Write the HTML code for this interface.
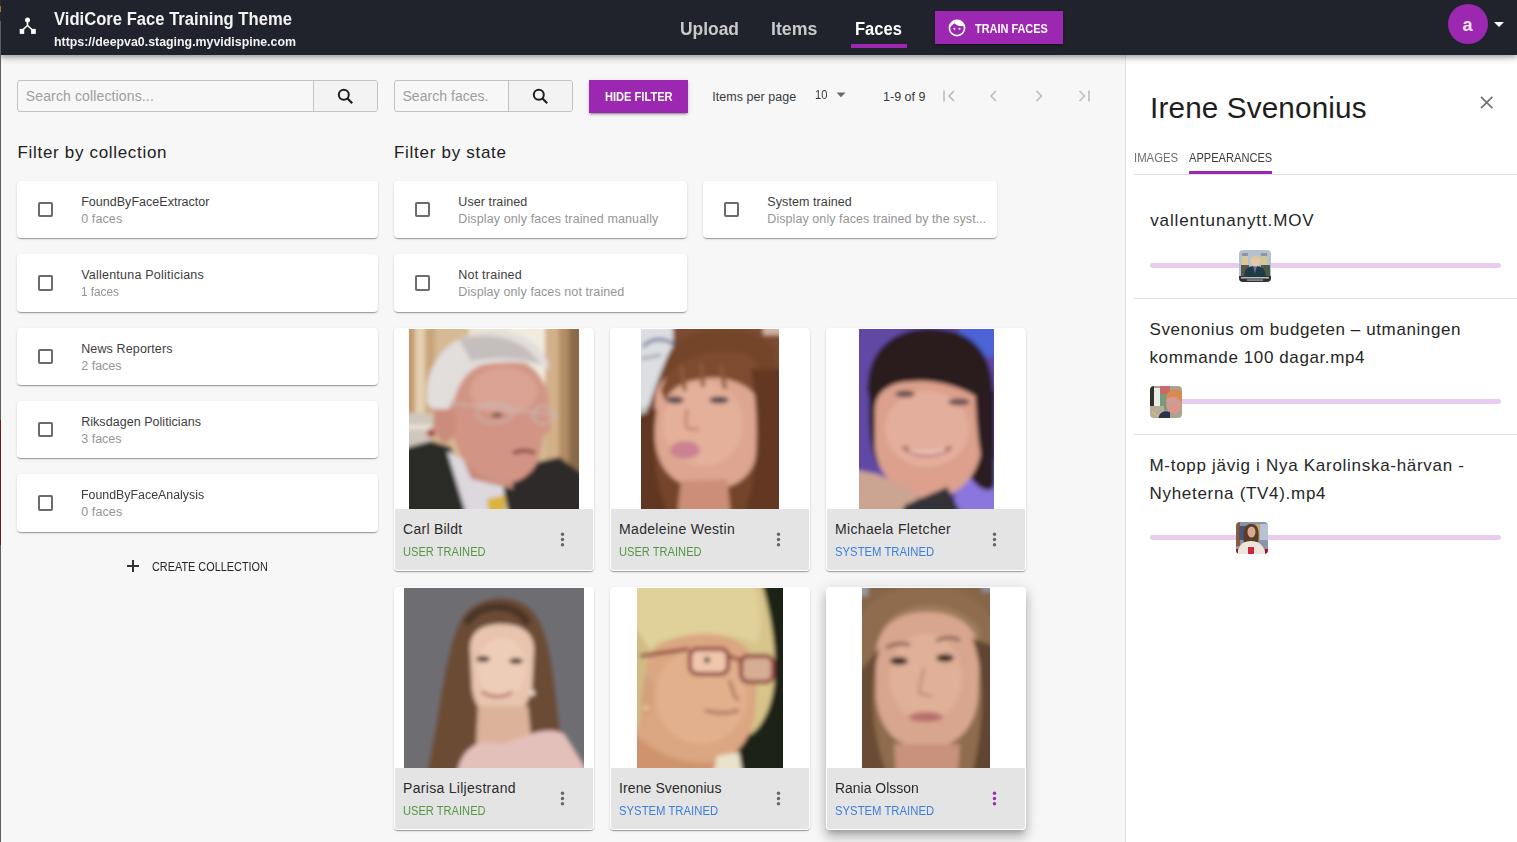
<!DOCTYPE html>
<html><head><meta charset="utf-8"><title>VidiCore Face Training Theme</title>
<style>
html,body{margin:0;padding:0;}
body{width:1517px;height:842px;overflow:hidden;position:relative;background:#f7f7f7;font-family:"Liberation Sans",sans-serif;}
.a{position:absolute;box-sizing:border-box;}
.t{position:absolute;z-index:10;white-space:pre;line-height:1;font-family:"Liberation Sans",sans-serif;}
.hdr{left:0;top:0;width:1517px;height:54.5px;background:#21232c;box-shadow:0 2px 4px -1px rgba(0,0,0,.2),0 4px 5px 0 rgba(0,0,0,.14),0 1px 10px 0 rgba(0,0,0,.12);z-index:5;}
.card{background:#fff;border-radius:4px;box-shadow:0 2px 1px -1px rgba(0,0,0,.2),0 1px 1px 0 rgba(0,0,0,.14),0 1px 3px 0 rgba(0,0,0,.12);}
.cb{width:15.4px;height:15.4px;border:2px solid #6c6c6c;border-radius:1.8px;}
.srch{border:1px solid #c2c2c2;border-radius:3px;background:#f7f7f7;}
.sbtn{background:#f3f3f3;border-left:1px solid #c2c2c2;}
.btn{background:#9c27b0;box-shadow:0 3px 1px -2px rgba(0,0,0,.2),0 2px 2px 0 rgba(0,0,0,.14),0 1px 5px 0 rgba(0,0,0,.12);border-radius:0;}
.fcard{background:#fff;border-radius:4px;box-shadow:0 2px 1px -1px rgba(0,0,0,.2),0 1px 1px 0 rgba(0,0,0,.14),0 1px 3px 0 rgba(0,0,0,.12);overflow:hidden;}
.fcard.hov{box-shadow:0 5px 5px -3px rgba(0,0,0,.2),0 8px 10px 1px rgba(0,0,0,.14),0 3px 14px 2px rgba(0,0,0,.12);}
.foot{position:absolute;left:1px;right:1px;bottom:1px;height:60.5px;background:#e4e4e4;border-radius:0 0 3px 3px;}
.dot{position:absolute;width:3.4px;height:3.4px;border-radius:50%;background:#666;}
.rp{left:1125px;top:54px;width:392px;height:788px;background:#fff;border-left:1px solid #e2e2e2;}
.hl{height:1px;background:#e0e0e0;}
.track{height:5px;border-radius:3px;background:#e8cbef;}
.thumb{width:32px;height:32px;border-radius:4px;overflow:hidden;}

</style></head><body>
<div class="a" style="left:0;top:0;width:1px;height:842px;background:#5e5e5e;z-index:9"></div><div class="a" style="left:0;top:0;width:1px;height:21px;background:#2c2a28;z-index:9"></div><div class="a" style="left:0;top:6px;width:1px;height:6px;background:#9a7838;z-index:9"></div><div class="a" style="left:0;top:420px;width:1px;height:125px;background:#6b1d1d;z-index:9"></div><div class="a hdr"></div><svg class="a" style="left:18px;top:16px;z-index:6" width="20" height="20" viewBox="0 0 20 20">
<circle cx="9.5" cy="4" r="2.5" fill="#fff"/>
<path d="M9.5 5 V9.5 L4 14.5 M9.5 9.5 L15 14.5" stroke="#fff" stroke-width="1.6" fill="none"/>
<rect x="1.7" y="12.9" width="4.5" height="5" fill="#fff"/>
<rect x="13.1" y="12.9" width="4.7" height="5" fill="#fff"/>
</svg><div class="a" style="left:851px;top:44px;width:56px;height:4px;background:#9c27b0;z-index:6"></div><div class="a btn" style="left:935px;top:11px;width:128px;height:33px;z-index:6"></div><svg class="a" style="left:948px;top:19px;z-index:7" width="18" height="18" viewBox="0 0 18 18">
<circle cx="9" cy="9" r="7.6" fill="none" stroke="#fff" stroke-width="1.6"/>
<path d="M1.6 8.6 L6.4 4.3 C8 6 9.8 6.8 12 7 L16.4 7.2 C15.6 3.6 12.6 1.4 9 1.4 C5 1.4 1.8 4.6 1.6 8.6Z" fill="#fff"/>
<circle cx="6.4" cy="9.8" r="1.05" fill="#fff"/><circle cx="11.5" cy="9.8" r="1.05" fill="#fff"/>
</svg><div class="a" style="left:1448px;top:4px;width:40px;height:40px;border-radius:50%;background:#9c27b0;z-index:6"></div><svg class="a" style="left:1493px;top:21px;z-index:6" width="12" height="7" viewBox="0 0 12 7"><path d="M1 1 H11 L6 6Z" fill="#fff"/></svg><div class="a srch" style="left:17px;top:80px;width:361px;height:32px;"></div><div class="a sbtn" style="left:313px;top:81px;width:64px;height:30px;border-radius:0 2px 2px 0"></div><svg class="a" style="left:337px;top:88px" width="17" height="17" viewBox="0 0 17 17"><circle cx="6.8" cy="6.8" r="5" fill="none" stroke="#1e1e1e" stroke-width="2"/><path d="M10.5 10.5 L15.2 15.2" stroke="#1e1e1e" stroke-width="2.2"/></svg><div class="a srch" style="left:394px;top:80px;width:179px;height:32px;"></div><div class="a sbtn" style="left:508px;top:81px;width:64px;height:30px;border-radius:0 2px 2px 0"></div><svg class="a" style="left:532px;top:88px" width="17" height="17" viewBox="0 0 17 17"><circle cx="6.8" cy="6.8" r="5" fill="none" stroke="#1e1e1e" stroke-width="2"/><path d="M10.5 10.5 L15.2 15.2" stroke="#1e1e1e" stroke-width="2.2"/></svg><div class="a btn" style="left:589px;top:80px;width:99px;height:32.5px;"></div><svg class="a" style="left:836px;top:92px" width="10" height="6" viewBox="0 0 10 6"><path d="M0.5 0.5 H9.5 L5 5.2Z" fill="#6a6a6a"/></svg><svg class="a" style="left:940px;top:87px" width="18" height="18" viewBox="0 0 18 18"><path d="M4 3.5 V14.5" stroke="#bcbcbc" stroke-width="1.6"/><path d="M14 4 L9 9 L14 14" stroke="#bcbcbc" stroke-width="1.6" fill="none"/></svg><svg class="a" style="left:984px;top:87px" width="18" height="18" viewBox="0 0 18 18"><path d="M12 4 L7 9 L12 14" stroke="#bcbcbc" stroke-width="1.6" fill="none"/></svg><svg class="a" style="left:1030px;top:87px" width="18" height="18" viewBox="0 0 18 18"><path d="M6.5 4 L11.5 9 L6.5 14" stroke="#bcbcbc" stroke-width="1.6" fill="none"/></svg><svg class="a" style="left:1076px;top:87px" width="18" height="18" viewBox="0 0 18 18"><path d="M3.5 4 L8.5 9 L3.5 14" stroke="#bcbcbc" stroke-width="1.6" fill="none"/><path d="M13 3.5 V14.5" stroke="#bcbcbc" stroke-width="1.6"/></svg><div class="a card" style="left:17px;top:181.00px;width:361px;height:57.33px"></div><div class="a cb" style="left:38px;top:202.00px"></div><div class="a card" style="left:17px;top:254.33px;width:361px;height:57.33px"></div><div class="a cb" style="left:38px;top:275.33px"></div><div class="a card" style="left:17px;top:327.67px;width:361px;height:57.33px"></div><div class="a cb" style="left:38px;top:348.67px"></div><div class="a card" style="left:17px;top:401.00px;width:361px;height:57.33px"></div><div class="a cb" style="left:38px;top:422.00px"></div><div class="a card" style="left:17px;top:474.33px;width:361px;height:57.33px"></div><div class="a cb" style="left:38px;top:495.33px"></div><svg class="a" style="left:126px;top:559px" width="14" height="14" viewBox="0 0 14 14"><path d="M7 1 V13 M1 7 H13" stroke="#333" stroke-width="2"/></svg><div class="a card" style="left:394px;top:181px;width:293px;height:57.33px"></div><div class="a cb" style="left:415px;top:202.00px"></div><div class="a card" style="left:703px;top:181px;width:294px;height:57.33px"></div><div class="a cb" style="left:724px;top:202.00px"></div><div class="a card" style="left:394px;top:254.33px;width:293px;height:57.33px"></div><div class="a cb" style="left:415px;top:275.33px"></div><div class="a rp"></div><svg class="a" style="left:1479px;top:95px" width="16" height="16" viewBox="0 0 16 16"><path d="M2 1.9 L13.4 13.1 M13.4 1.9 L2 13.1" stroke="#737373" stroke-width="1.7"/></svg><div class="a hl" style="left:1134px;top:174px;width:383px;"></div><div class="a" style="left:1189px;top:171px;width:83px;height:3px;background:#9c27b0"></div><div class="a hl" style="left:1134px;top:298px;width:383px;"></div><div class="a hl" style="left:1134px;top:434px;width:383px;"></div><div class="a track" style="left:1150px;top:263px;width:351px"></div><div class="a track" style="left:1150px;top:399px;width:351px"></div><div class="a track" style="left:1150px;top:535px;width:351px"></div>
<div class="a fcard" style="left:394px;top:328px;width:200px;height:242.5px;z-index:2"><div class="foot"></div></div><svg class="a" style="left:409px;top:329px;z-index:3" width="170" height="180" viewBox="0 0 170 180" preserveAspectRatio="none"><defs><filter id="b409_329" x="-10%" y="-10%" width="120%" height="120%"><feGaussianBlur stdDeviation="2.2"/></filter><clipPath id="c409_329"><rect width="170" height="180"/></clipPath></defs><g clip-path="url(#c409_329)"><g filter="url(#b409_329)">
<rect x="-8" y="-8" width="186" height="196" fill="#d6ba94"/>
<rect x="-8" y="-8" width="14" height="196" fill="#c49a6c"/>
<rect x="6" y="-8" width="10" height="130" fill="#e4d0b2"/>
<rect x="16" y="-8" width="10" height="130" fill="#caa47a"/>
<rect x="60" y="-8" width="80" height="80" fill="#ece2d0"/>
<rect x="100" y="-8" width="40" height="110" fill="#f2ece0"/>
<rect x="136" y="-8" width="14" height="196" fill="#d2b08a"/>
<rect x="150" y="-8" width="10" height="196" fill="#b48c64"/>
<rect x="160" y="-8" width="20" height="196" fill="#8a6a4a"/>
<rect x="-8" y="84" width="32" height="36" fill="#d0c6ba"/>
<rect x="-8" y="96" width="30" height="4" fill="#ece6de"/>
<circle cx="22" cy="104" r="4" fill="#a84438"/>
<path d="M-8 120 L22 112 L42 118 L64 188 L-8 188Z" fill="#2c2a28"/>
<path d="M94 160 L124 134 L150 128 L178 148 L178 188 L94 188Z" fill="#2e2c2a"/>
<path d="M38 122 L64 136 L94 158 L100 188 L58 188Z" fill="#dcd8de"/>
<path d="M78 170 L96 166 L97 188 L80 188Z" fill="#dab43c"/>
<path d="M46 110 L100 118 L104 160 L62 150Z" fill="#c68c7c"/>
<path d="M40 58 C40 35 70 28 100 30 C125 32 138 50 140 75 L142 100 L134 108 L130 130 C122 148 106 156 92 154 C72 150 56 138 48 118 L40 96 Z" fill="#d29484"/>
<ellipse cx="95" cy="62" rx="34" ry="24" fill="#daa292"/>
<ellipse cx="36" cy="92" rx="11" ry="22" fill="#cc8c7c"/>
<path d="M18 74 C14 30 45 2 85 2 C120 2 138 20 140 40 C122 32 95 32 72 36 C58 42 50 54 46 68 L40 80 L28 80 C22 80 19 77 18 74Z" fill="#e2dedc"/>
<path d="M50 10 C80 2 115 8 132 36 C112 28 85 28 62 32Z" fill="#c4bebc"/>
<path d="M40 74 L150 86" stroke="#c8bcb4" stroke-width="1.6" fill="none"/>
<ellipse cx="86" cy="84" rx="18" ry="10" fill="none" stroke="#c6bab2" stroke-width="1.8"/>
<ellipse cx="134" cy="86" rx="10" ry="9" fill="none" stroke="#c6bab2" stroke-width="1.8"/>
<ellipse cx="88" cy="86" rx="6" ry="2.5" fill="#7a5450"/>
<path d="M104 124 C112 121 120 121 126 124" stroke="#7a3a3a" stroke-width="3.5" fill="none"/>
</g></g></svg><svg class="a" style="left:554px;top:528px;z-index:4" width="16" height="24" viewBox="0 0 16 24"><circle cx="8.5" cy="6.2" r="1.7" fill="#666"/><circle cx="8.5" cy="11.45" r="1.7" fill="#666"/><circle cx="8.5" cy="16.7" r="1.7" fill="#666"/></svg><div class="a fcard" style="left:610px;top:328px;width:200px;height:242.5px;z-index:2"><div class="foot"></div></div><svg class="a" style="left:641px;top:329px;z-index:3" width="138" height="180" viewBox="0 0 138 180" preserveAspectRatio="none"><defs><filter id="b641_329" x="-10%" y="-10%" width="120%" height="120%"><feGaussianBlur stdDeviation="2.2"/></filter><clipPath id="c641_329"><rect width="138" height="180"/></clipPath></defs><g clip-path="url(#c641_329)"><g filter="url(#b641_329)">
<rect x="-8" y="-8" width="154" height="196" fill="#7c4c30"/>
<rect x="-8" y="-8" width="40" height="86" fill="#dcdee2"/>
<path d="M2 18 C10 8 26 8 36 18" stroke="#3a4a7a" stroke-width="2.5" fill="none"/>
<path d="M0 30 L20 26" stroke="#7a8090" stroke-width="2"/>
<rect x="-8" y="78" width="14" height="50" fill="#c0c4bc"/>
<rect x="122" y="-8" width="22" height="14" fill="#d2b4a4"/>
<path d="M30 20 C50 -5 110 -8 134 20 L146 188 L-8 188 L-8 120 C5 90 15 50 30 20Z" fill="#74452a"/>
<path d="M14 72 C14 46 40 38 70 38 C100 38 118 55 118 80 L116 122 C112 150 92 162 62 160 C34 158 16 140 14 110Z" fill="#dea690"/>
<ellipse cx="62" cy="95" rx="40" ry="42" fill="#e4b09a"/>
<path d="M20 62 C28 30 70 16 106 26 C120 34 126 50 126 70 L114 66 C102 52 80 46 60 50 C44 52 30 58 24 72Z" fill="#7e4c2e"/>
<path d="M40 36 L44 62 M60 34 L62 58 M80 36 L84 60" stroke="#8e5a38" stroke-width="4"/>
<path d="M110 40 L146 40 L146 188 L102 188 C116 150 120 100 110 40Z" fill="#623820"/>
<path d="M-8 88 L16 80 C10 120 14 160 30 188 L-8 188Z" fill="#603820"/>
<ellipse cx="34" cy="71" rx="9" ry="3.5" fill="#504850"/>
<ellipse cx="78" cy="71" rx="10" ry="3.5" fill="#504850"/>
<path d="M46 80 C46 90 42 96 48 100 L58 100" stroke="#be7a6a" stroke-width="2.5" fill="none"/>
<ellipse cx="44" cy="121" rx="15" ry="9" fill="#cc8290"/>
<path d="M40 152 L86 150 L90 188 L36 188Z" fill="#cc8e78"/>
</g></g></svg><svg class="a" style="left:770px;top:528px;z-index:4" width="16" height="24" viewBox="0 0 16 24"><circle cx="8.5" cy="6.2" r="1.7" fill="#666"/><circle cx="8.5" cy="11.45" r="1.7" fill="#666"/><circle cx="8.5" cy="16.7" r="1.7" fill="#666"/></svg><div class="a fcard" style="left:826px;top:328px;width:200px;height:242.5px;z-index:2"><div class="foot"></div></div><svg class="a" style="left:859px;top:329px;z-index:3" width="135" height="180" viewBox="0 0 135 180" preserveAspectRatio="none"><defs><filter id="b859_329" x="-10%" y="-10%" width="120%" height="120%"><feGaussianBlur stdDeviation="2.2"/></filter><clipPath id="c859_329"><rect width="135" height="180"/></clipPath></defs><g clip-path="url(#c859_329)"><g filter="url(#b859_329)">
<rect x="-8" y="-8" width="151" height="196" fill="#6048a4"/>
<rect x="100" y="-8" width="43" height="36" fill="#4c64d4"/>
<rect x="96" y="130" width="47" height="58" fill="#8a76dc"/>
<path d="M10 70 C2 20 40 -4 78 0 C118 2 138 30 134 80 L134 160 C122 165 112 150 106 140 L30 140 C12 140 10 110 10 70Z" fill="#2a1c1e"/>
<path d="M16 80 C16 58 40 50 70 50 C100 50 122 62 124 85 L122 122 C118 150 96 170 70 170 C44 170 20 150 16 120Z" fill="#dca08c"/>
<ellipse cx="68" cy="100" rx="42" ry="38" fill="#e4ae9c"/>
<path d="M8 62 C12 15 50 0 80 2 C115 4 136 30 132 75 L126 74 C112 62 86 52 62 52 C40 52 24 56 14 64Z" fill="#2a1a1e"/>
<path d="M116 62 L136 62 L136 158 C124 150 118 120 116 62Z" fill="#2c1a20"/>
<path d="M-8 140 L-8 188 L70 188 L52 160 L18 145Z" fill="#cca492"/>
<path d="M46 176 L88 158 L104 188 L40 188Z" fill="#323238"/>
<ellipse cx="46" cy="65" rx="10" ry="3.5" fill="#6a5050"/>
<ellipse cx="100" cy="73" rx="11" ry="3.5" fill="#6a5050"/>
<path d="M44 118 C58 128 80 128 92 118" stroke="#ac5c64" stroke-width="4" fill="none"/>
<path d="M50 121 C60 125 76 125 86 121" stroke="#f2e0d6" stroke-width="2" fill="none"/>
</g></g></svg><svg class="a" style="left:986px;top:528px;z-index:4" width="16" height="24" viewBox="0 0 16 24"><circle cx="8.5" cy="6.2" r="1.7" fill="#666"/><circle cx="8.5" cy="11.45" r="1.7" fill="#666"/><circle cx="8.5" cy="16.7" r="1.7" fill="#666"/></svg><div class="a fcard" style="left:394px;top:587px;width:200px;height:242.5px;z-index:2"><div class="foot"></div></div><svg class="a" style="left:404px;top:588px;z-index:3" width="180" height="180" viewBox="0 0 180 180" preserveAspectRatio="none"><defs><filter id="b404_588" x="-10%" y="-10%" width="120%" height="120%"><feGaussianBlur stdDeviation="2.2"/></filter><clipPath id="c404_588"><rect width="180" height="180"/></clipPath></defs><g clip-path="url(#c404_588)"><g filter="url(#b404_588)">
<rect x="-8" y="-8" width="196" height="196" fill="#6e6e72"/>
<path d="M22 188 C36 130 40 60 58 30 C74 4 118 2 134 30 C152 62 152 130 162 188Z" fill="#6c4c36"/>
<path d="M62 36 C74 14 112 12 124 36" stroke="#4a3628" stroke-width="8" fill="none"/>
<path d="M66 60 C66 42 80 36 98 36 C118 36 130 45 130 62 L128 100 C124 120 112 130 98 130 C82 130 70 120 68 100Z" fill="#e8c4ae"/>
<ellipse cx="98" cy="80" rx="24" ry="30" fill="#eecdb8"/>
<path d="M74 118 L124 118 L128 160 L72 160Z" fill="#dcb29a"/>
<path d="M52 188 C58 160 72 150 98 156 C120 150 140 136 160 146 L186 188Z" fill="#e4c0ba"/>
<ellipse cx="79" cy="71" rx="7" ry="3" fill="#4a3028"/>
<ellipse cx="112" cy="73" rx="7" ry="3" fill="#4a3028"/>
<path d="M78 104 C88 110 100 110 108 104" stroke="#b46c64" stroke-width="3" fill="none"/>
<circle cx="128" cy="105" r="3" fill="#e6d8cc"/>
</g></g></svg><svg class="a" style="left:554px;top:787px;z-index:4" width="16" height="24" viewBox="0 0 16 24"><circle cx="8.5" cy="6.2" r="1.7" fill="#666"/><circle cx="8.5" cy="11.45" r="1.7" fill="#666"/><circle cx="8.5" cy="16.7" r="1.7" fill="#666"/></svg><div class="a fcard" style="left:610px;top:587px;width:200px;height:242.5px;z-index:2"><div class="foot"></div></div><svg class="a" style="left:637px;top:588px;z-index:3" width="146" height="180" viewBox="0 0 146 180" preserveAspectRatio="none"><defs><filter id="b637_588" x="-10%" y="-10%" width="120%" height="120%"><feGaussianBlur stdDeviation="2.2"/></filter><clipPath id="c637_588"><rect width="146" height="180"/></clipPath></defs><g clip-path="url(#c637_588)"><g filter="url(#b637_588)">
<rect x="-8" y="-8" width="162" height="196" fill="#1c2014"/>
<path d="M-8 -8 L124 -8 C132 20 138 50 138 80 C138 112 128 136 114 146 L-8 158Z" fill="#d6c48a"/>
<path d="M-8 -8 L116 -8 C124 15 126 38 120 56 C98 46 60 42 22 54 L-8 76Z" fill="#e0d09a"/>
<path d="M8 82 C8 56 40 46 70 46 C100 46 118 60 120 90 L118 128 C112 158 92 176 66 180 L-8 188 L-8 120Z" fill="#dba682"/>
<ellipse cx="64" cy="108" rx="46" ry="48" fill="#e2b08c"/>
<path d="M-8 140 C20 170 60 184 100 168 L106 188 L-8 188Z" fill="#cf946e"/>
<ellipse cx="9" cy="108" rx="9" ry="20" fill="#d4a07c"/>
<path d="M-8 30 L-8 150 C0 146 6 130 4 112 L12 60Z" fill="#d0bc82"/>
<path d="M3 68 L52 61" stroke="#8c3c3a" stroke-width="3.5"/>
<rect x="53" y="61" width="38" height="25" rx="7" fill="#f0c6ac" stroke="#8c3c3a" stroke-width="4"/>
<rect x="104" y="68" width="32" height="26" rx="7" fill="#d6ae94" stroke="#8c3c3a" stroke-width="4"/>
<path d="M91 68 L104 72" stroke="#8c3c3a" stroke-width="3"/>
<circle cx="70" cy="72" r="3" fill="#4a3a40"/>
<path d="M92 92 C98 104 96 110 102 112" stroke="#b07060" stroke-width="3" fill="none"/>
<path d="M68 122 C78 126 92 126 102 122" stroke="#ac6c5e" stroke-width="3" fill="none"/>
<path d="M80 168 L102 164 L106 188 L76 188Z" fill="#eae2ca"/>
<circle cx="9" cy="120" r="2" fill="#f0e0a0"/>
</g></g></svg><svg class="a" style="left:770px;top:787px;z-index:4" width="16" height="24" viewBox="0 0 16 24"><circle cx="8.5" cy="6.2" r="1.7" fill="#666"/><circle cx="8.5" cy="11.45" r="1.7" fill="#666"/><circle cx="8.5" cy="16.7" r="1.7" fill="#666"/></svg><div class="a fcard hov" style="left:826px;top:587px;width:200px;height:242.5px;z-index:2"><div class="foot"></div></div><svg class="a" style="left:862px;top:588px;z-index:3" width="128" height="180" viewBox="0 0 128 180" preserveAspectRatio="none"><defs><filter id="b862_588" x="-10%" y="-10%" width="120%" height="120%"><feGaussianBlur stdDeviation="2.2"/></filter><clipPath id="c862_588"><rect width="128" height="180"/></clipPath></defs><g clip-path="url(#c862_588)"><g filter="url(#b862_588)">
<rect x="-8" y="-8" width="144" height="196" fill="#86664a"/>
<rect x="-8" y="-8" width="14" height="16" fill="#9a9aa2"/>
<rect x="120" y="-8" width="16" height="12" fill="#8c929a"/>
<path d="M-8 188 L-8 40 C6 4 40 -2 64 -2 C96 -2 130 12 136 50 L136 188Z" fill="#8e6c4e"/>
<path d="M20 40 C40 10 90 8 118 40 L120 70 C110 40 80 28 60 28 C40 28 25 40 18 70Z" fill="#9c7a5a"/>
<path d="M14 62 C18 34 40 24 64 24 C92 24 112 34 118 62 L116 110 C112 146 90 160 64 160 C38 160 18 146 14 110Z" fill="#d8a68e"/>
<ellipse cx="64" cy="90" rx="36" ry="44" fill="#e0b098"/>
<path d="M110 50 C122 80 124 130 110 188 L136 188 L136 60Z" fill="#5e4432"/>
<path d="M18 60 C6 100 10 150 26 188 L-8 188 L-8 90Z" fill="#6a4c36"/>
<path d="M32 156 L98 156 L96 188 L34 188Z" fill="#c8927c"/>
<path d="M24 60 C32 55 40 55 48 57 M74 53 C82 49 90 49 98 52" stroke="#5a3c30" stroke-width="2.5" fill="none"/>
<ellipse cx="37" cy="73" rx="9" ry="4" fill="#3e2a28"/>
<ellipse cx="83" cy="70" rx="9" ry="4" fill="#3e2a28"/>
<path d="M62 80 C60 90 56 100 58 106 L70 108" stroke="#c08a78" stroke-width="2.5" fill="none"/>
<ellipse cx="64" cy="129" rx="17" ry="5" fill="#b86e6c"/>
</g></g></svg><svg class="a" style="left:986px;top:787px;z-index:4" width="16" height="24" viewBox="0 0 16 24"><circle cx="8.5" cy="6.2" r="1.7" fill="#9c27b0"/><circle cx="8.5" cy="11.45" r="1.7" fill="#9c27b0"/><circle cx="8.5" cy="16.7" r="1.7" fill="#9c27b0"/></svg><div class="a" style="left:1239px;top:250px;width:32px;height:32px;border-radius:4px;overflow:hidden;z-index:4"><svg class="a" style="left:0;top:0;z-index:4" width="32" height="32" viewBox="0 0 32 32" preserveAspectRatio="none"><defs><filter id="b0_0" x="-10%" y="-10%" width="120%" height="120%"><feGaussianBlur stdDeviation="0.5"/></filter><clipPath id="c0_0"><rect width="32" height="32"/></clipPath></defs><g clip-path="url(#c0_0)"><g filter="url(#b0_0)"><rect x="-2" y="-2" width="36" height="36" fill="#b4c2ce"/>
<rect x="3" y="4" width="6" height="11" fill="#d8c89a"/><rect x="3" y="3" width="6" height="3" fill="#8c96a8"/>
<rect x="22" y="4" width="6" height="11" fill="#d6c496"/><rect x="22" y="3" width="6" height="3" fill="#8c96a8"/>
<rect x="2" y="15" width="8" height="12" fill="#5a5448"/><rect x="22" y="15" width="9" height="12" fill="#4a5a48"/>
<path d="M5 28 C5 19 9 16 16 16 C23 16 27 19 27 28Z" fill="#1c3a46"/>
<path d="M14 16 L16 24 L18 16Z" fill="#6a6c90"/>
<ellipse cx="16.5" cy="11" rx="4.5" ry="5.5" fill="#e6c8a8"/>
<path d="M11 11 C10 4 23 4 22 11 L22 15 L20 9 L13 9 L11 15Z" fill="#d8c8a0"/>
<rect x="-2" y="26" width="36" height="8" fill="#2e3236"/><rect x="2" y="27" width="28" height="1.5" fill="#b8bcc0"/><rect x="8" y="29.5" width="16" height="1.2" fill="#a8acb0"/></g></g></svg></div><div class="a" style="left:1150px;top:386px;width:32px;height:32px;border-radius:4px;overflow:hidden;z-index:4"><svg class="a" style="left:0;top:0;z-index:4" width="32" height="32" viewBox="0 0 32 32" preserveAspectRatio="none"><defs><filter id="b1_1" x="-10%" y="-10%" width="120%" height="120%"><feGaussianBlur stdDeviation="0.5"/></filter><clipPath id="c1_1"><rect width="32" height="32"/></clipPath></defs><g clip-path="url(#c1_1)"><g filter="url(#b1_1)"><rect x="-2" y="-2" width="36" height="36" fill="#a8a490"/>
<rect x="0" y="0" width="4" height="20" fill="#30302a"/><rect x="4" y="2" width="6" height="18" fill="#e8ece6"/>
<rect x="10" y="0" width="10" height="8" fill="#c86a68"/><rect x="10" y="8" width="8" height="16" fill="#7a9a7c"/>
<rect x="-2" y="20" width="16" height="14" fill="#b8ae98"/><path d="M2 26 L10 32" stroke="#d8c070" stroke-width="1.5"/>
<path d="M8 34 C9 26 14 24 20 26 L20 34Z" fill="#2a3050"/>
<ellipse cx="24" cy="17" rx="8" ry="11" fill="#d8968c"/>
<path d="M16 12 C16 2 32 0 34 10 L34 22 C32 14 26 8 18 12Z" fill="#d88a50"/>
<path d="M17 16 L31 16" stroke="#b0a8b8" stroke-width="1.2"/></g></g></svg></div><div class="a" style="left:1236px;top:522px;width:32px;height:32px;border-radius:4px;overflow:hidden;z-index:4"><svg class="a" style="left:0;top:0;z-index:4" width="32" height="32" viewBox="0 0 32 32" preserveAspectRatio="none"><defs><filter id="b2_2" x="-10%" y="-10%" width="120%" height="120%"><feGaussianBlur stdDeviation="0.5"/></filter><clipPath id="c2_2"><rect width="32" height="32"/></clipPath></defs><g clip-path="url(#c2_2)"><g filter="url(#b2_2)"><rect x="-2" y="-2" width="36" height="36" fill="#8a94a8"/>
<rect x="-2" y="-2" width="6" height="26" fill="#8a5a3a"/><rect x="3" y="4" width="8" height="14" fill="#4a5478"/>
<rect x="20" y="2" width="4" height="16" fill="#c8a070"/><rect x="24" y="2" width="8" height="16" fill="#b4c4d4"/>
<path d="M8 22 C6 6 10 2 15 2 C21 2 24 6 22 22Z" fill="#5a3c28"/>
<ellipse cx="15.5" cy="10" rx="4" ry="5.5" fill="#d8a890"/>
<path d="M1 34 C2 22 8 19 15 19 C22 19 28 22 30 34Z" fill="#ece6dc"/>
<rect x="12" y="25" width="6" height="9" fill="#d02840"/>
<rect x="-2" y="27" width="4" height="7" fill="#b01020"/><rect x="29" y="27" width="5" height="7" fill="#b01020"/></g></g></svg></div>
<div class="t" style="left:53.50px;top:9.56px;font-size:18px;font-weight:700;color:#f2f2f2;letter-spacing:0.000px;transform:scaleX(0.9231);transform-origin:0 0;">VidiCore Face Training Theme</div><div class="t" style="left:53.50px;top:35.82px;font-size:12.5px;font-weight:700;color:#f2f2f2;letter-spacing:0.000px;transform:scaleX(0.9897);transform-origin:0 0;">https://deepva0.staging.myvidispine.com</div><div class="t" style="left:680.10px;top:19.86px;font-size:18px;font-weight:700;color:#c9c9c9;letter-spacing:0.000px;transform:scaleX(0.9667);transform-origin:0 0;">Upload</div><div class="t" style="left:770.90px;top:19.86px;font-size:18px;font-weight:700;color:#c9c9c9;letter-spacing:0.000px;transform:scaleX(0.9863);transform-origin:0 0;">Items</div><div class="t" style="left:854.90px;top:19.86px;font-size:18px;font-weight:700;color:#ffffff;letter-spacing:0.000px;transform:scaleX(0.9191);transform-origin:0 0;">Faces</div><div class="t" style="left:974.50px;top:22.09px;font-size:13px;font-weight:700;color:#ffffff;letter-spacing:0.000px;transform:scaleX(0.8404);transform-origin:0 0;">TRAIN FACES</div><div class="t" style="left:1462.50px;top:16.26px;font-size:18px;font-weight:700;color:#f4e6f7;letter-spacing:0.000px;">a</div><div class="t" style="left:25.80px;top:89.15px;font-size:14px;font-weight:400;color:#9e9e9e;letter-spacing:0.135px;">Search collections...</div><div class="t" style="left:402.50px;top:89.15px;font-size:14px;font-weight:400;color:#9e9e9e;letter-spacing:0.033px;">Search faces.</div><div class="t" style="left:605.00px;top:91.32px;font-size:12.5px;font-weight:700;color:#ffffff;letter-spacing:0.000px;transform:scaleX(0.8875);transform-origin:0 0;">HIDE FILTER</div><div class="t" style="left:712.20px;top:91.02px;font-size:12.5px;font-weight:400;color:#3a3a3a;letter-spacing:0.047px;">Items per page</div><div class="t" style="left:815.00px;top:89.42px;font-size:12.5px;font-weight:400;color:#3a3a3a;letter-spacing:0.000px;transform:scaleX(0.8910);transform-origin:0 0;">10</div><div class="t" style="left:883.00px;top:91.42px;font-size:12.5px;font-weight:400;color:#3a3a3a;letter-spacing:0.016px;">1-9 of 9</div><div class="t" style="left:17.50px;top:143.91px;font-size:17px;font-weight:400;color:#212121;letter-spacing:0.681px;">Filter by collection</div><div class="t" style="left:394.00px;top:143.91px;font-size:17px;font-weight:400;color:#212121;letter-spacing:0.711px;">Filter by state</div><div class="t" style="left:81.20px;top:195.92px;font-size:12.5px;font-weight:400;color:#3d3d3d;letter-spacing:0.024px;">FoundByFaceExtractor</div><div class="t" style="left:81.20px;top:212.92px;font-size:12.5px;font-weight:400;color:#959595;letter-spacing:0.115px;">0 faces</div><div class="t" style="left:81.20px;top:268.92px;font-size:12.5px;font-weight:400;color:#3d3d3d;letter-spacing:0.224px;">Vallentuna Politicians</div><div class="t" style="left:81.20px;top:285.92px;font-size:12.5px;font-weight:400;color:#959595;letter-spacing:0.000px;transform:scaleX(0.9412);transform-origin:0 0;">1 faces</div><div class="t" style="left:81.20px;top:342.92px;font-size:12.5px;font-weight:400;color:#3d3d3d;letter-spacing:0.129px;">News Reporters</div><div class="t" style="left:81.20px;top:359.92px;font-size:12.5px;font-weight:400;color:#959595;letter-spacing:0.015px;">2 faces</div><div class="t" style="left:81.20px;top:415.92px;font-size:12.5px;font-weight:400;color:#3d3d3d;letter-spacing:0.044px;">Riksdagen Politicians</div><div class="t" style="left:81.20px;top:432.92px;font-size:12.5px;font-weight:400;color:#959595;letter-spacing:0.015px;">3 faces</div><div class="t" style="left:81.20px;top:488.92px;font-size:12.5px;font-weight:400;color:#3d3d3d;letter-spacing:0.000px;transform:scaleX(0.9905);transform-origin:0 0;">FoundByFaceAnalysis</div><div class="t" style="left:81.20px;top:505.92px;font-size:12.5px;font-weight:400;color:#959595;letter-spacing:0.115px;">0 faces</div><div class="t" style="left:151.60px;top:561.32px;font-size:12.5px;font-weight:400;color:#262626;letter-spacing:0.000px;transform:scaleX(0.8704);transform-origin:0 0;">CREATE COLLECTION</div><div class="t" style="left:458.30px;top:195.62px;font-size:12.5px;font-weight:400;color:#3d3d3d;letter-spacing:0.082px;">User trained</div><div class="t" style="left:458.30px;top:212.62px;font-size:12.5px;font-weight:400;color:#959595;letter-spacing:0.119px;">Display only faces trained manually</div><div class="t" style="left:767.30px;top:195.62px;font-size:12.5px;font-weight:400;color:#3d3d3d;letter-spacing:0.087px;">System trained</div><div class="t" style="left:767.30px;top:212.62px;font-size:12.5px;font-weight:400;color:#959595;letter-spacing:0.073px;">Display only faces trained by the syst...</div><div class="t" style="left:458.30px;top:268.62px;font-size:12.5px;font-weight:400;color:#3d3d3d;letter-spacing:0.224px;">Not trained</div><div class="t" style="left:458.30px;top:285.62px;font-size:12.5px;font-weight:400;color:#959595;letter-spacing:0.094px;">Display only faces not trained</div><div class="t" style="left:403.10px;top:522.15px;font-size:14px;font-weight:400;color:#2b2b2b;letter-spacing:0.245px;">Carl Bildt</div><div class="t" style="left:403.10px;top:546.42px;font-size:12.5px;font-weight:400;color:#559646;letter-spacing:0.000px;transform:scaleX(0.8896);transform-origin:0 0;">USER TRAINED</div><div class="t" style="left:619.10px;top:522.15px;font-size:14px;font-weight:400;color:#2b2b2b;letter-spacing:0.311px;">Madeleine Westin</div><div class="t" style="left:619.10px;top:546.42px;font-size:12.5px;font-weight:400;color:#559646;letter-spacing:0.000px;transform:scaleX(0.8896);transform-origin:0 0;">USER TRAINED</div><div class="t" style="left:835.10px;top:522.15px;font-size:14px;font-weight:400;color:#2b2b2b;letter-spacing:0.325px;">Michaela Fletcher</div><div class="t" style="left:835.10px;top:546.42px;font-size:12.5px;font-weight:400;color:#3d7fd9;letter-spacing:0.000px;transform:scaleX(0.9049);transform-origin:0 0;">SYSTEM TRAINED</div><div class="t" style="left:403.10px;top:781.15px;font-size:14px;font-weight:400;color:#2b2b2b;letter-spacing:0.295px;">Parisa Liljestrand</div><div class="t" style="left:403.10px;top:805.42px;font-size:12.5px;font-weight:400;color:#559646;letter-spacing:0.000px;transform:scaleX(0.8896);transform-origin:0 0;">USER TRAINED</div><div class="t" style="left:619.10px;top:781.15px;font-size:14px;font-weight:400;color:#2b2b2b;letter-spacing:0.087px;">Irene Svenonius</div><div class="t" style="left:619.10px;top:805.42px;font-size:12.5px;font-weight:400;color:#3d7fd9;letter-spacing:0.000px;transform:scaleX(0.9049);transform-origin:0 0;">SYSTEM TRAINED</div><div class="t" style="left:835.10px;top:781.15px;font-size:14px;font-weight:400;color:#2b2b2b;letter-spacing:0.000px;transform:scaleX(0.9970);transform-origin:0 0;">Rania Olsson</div><div class="t" style="left:835.10px;top:805.42px;font-size:12.5px;font-weight:400;color:#3d7fd9;letter-spacing:0.000px;transform:scaleX(0.9049);transform-origin:0 0;">SYSTEM TRAINED</div><div class="t" style="left:1150.10px;top:93.45px;font-size:29.7px;font-weight:400;color:#1e1e1e;letter-spacing:0.131px;">Irene Svenonius</div><div class="t" style="left:1133.90px;top:150.99px;font-size:13px;font-weight:400;color:#6f6f6f;letter-spacing:0.000px;transform:scaleX(0.8714);transform-origin:0 0;">IMAGES</div><div class="t" style="left:1188.90px;top:150.99px;font-size:13px;font-weight:400;color:#3c3c3c;letter-spacing:0.000px;transform:scaleX(0.8535);transform-origin:0 0;">APPEARANCES</div><div class="t" style="left:1150.20px;top:212.11px;font-size:17px;font-weight:400;color:#262626;letter-spacing:0.891px;">vallentunanytt.MOV</div><div class="t" style="left:1149.50px;top:320.61px;font-size:17px;font-weight:400;color:#262626;letter-spacing:0.603px;">Svenonius om budgeten – utmaningen</div><div class="t" style="left:1149.50px;top:348.61px;font-size:17px;font-weight:400;color:#262626;letter-spacing:0.607px;">kommande 100 dagar.mp4</div><div class="t" style="left:1149.50px;top:456.61px;font-size:17px;font-weight:400;color:#262626;letter-spacing:0.712px;">M-topp jävig i Nya Karolinska-härvan -</div><div class="t" style="left:1149.50px;top:484.61px;font-size:17px;font-weight:400;color:#262626;letter-spacing:0.697px;">Nyheterna (TV4).mp4</div>
</body></html>
